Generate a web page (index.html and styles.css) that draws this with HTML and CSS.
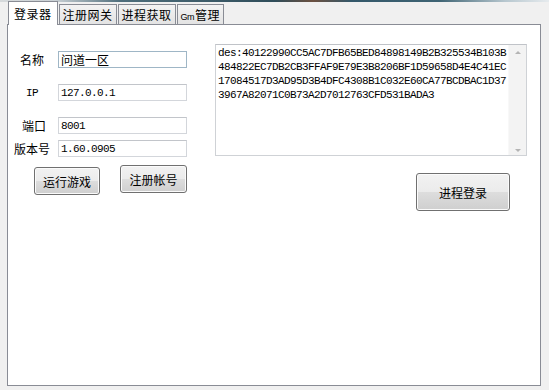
FILE: index.html
```html
<!DOCTYPE html>
<html lang="zh-CN">
<head>
  <meta charset="UTF-8">
  <meta name="viewport" content="width=device-width, initial-scale=1.0">
  <title>登录器</title>
  <link rel="stylesheet" href="styles.css">
</head>
<body>
<div class="titlebar"></div>
<div class="window">

  <!-- tab strip -->
  <div class="tabs">
    <div class="tab active">登录器</div>
    <div class="tab">注册网关</div>
    <div class="tab">进程获取</div>
    <div class="tab"><span class="gm">Gm</span>管理</div>
  </div>

  <div class="panel">
    <!-- left: server fields -->
    <div class="left">
      <div class="field first">
        <span class="label">名称</span>
        <input class="input hot" type="text" value="问道一区">
      </div>
      <div class="field">
        <span class="label mono">IP</span>
        <input class="input mono" type="text" value="127.0.0.1">
      </div>
      <div class="field">
        <span class="label port">端口</span>
        <input class="input mono" type="text" value="8001">
      </div>
      <div class="field tight">
        <span class="label">版本号</span>
        <input class="input mono" type="text" value="1.60.0905">
      </div>

      <div class="buttons">
        <button class="btn run">运行游戏</button>
        <button class="btn">注册帐号</button>
      </div>
    </div>

    <!-- right: key memo -->
    <div class="right">
      <div class="memo">
        <div class="memo-text">des:40122990CC5AC7DFB65BED84898149B2B325534B103B<br>484822EC7DB2CB3FFAF9E79E3B8206BF1D59658D4E4C41EC<br>17084517D3AD95D3B4DFC4308B1C032E60CA77BCDBAC1D37<br>3967A82071C0B73A2D7012763CFD531BADA3</div>
        <div class="scrollbar">
          <span class="arrow up"></span>
          <span class="arrow down"></span>
        </div>
      </div>
      <button class="btn big">进程登录</button>
    </div>
  </div>
</div>
</body>
</html>
```

FILE: styles.css
```css
body {
  margin: 0;
  width: 549px;
  height: 390px;
  overflow: hidden;
  background-color: #f0f0f0;
  font-family: "Noto Sans CJK SC", sans-serif;
  font-size: 12px;
  color: #000;
}

.titlebar {
  height: 2px;
  background: linear-gradient(90deg, #d6dadc 0%, #c9d0d4 10%, #4f6e7c 22%, #2f4d5a 50%, #6b5040 57%, #34586a 64%, #3f6474 80%, #b7c7cf 92%, #e6ebee 100%);
}

.window {
  padding-left: 7px;
}

/* Tabs */
.tabs {
  display: flex;
  align-items: flex-end;
  height: 22px;
  margin-left: 1px;
}

.tab {
  position: relative;
  height: 19px;
  line-height: 20px;
  padding: 0 3px;
  margin-left: 1px;
  letter-spacing: 0.5px;
  border: 1px solid #898c95;
  border-bottom: none;
  background: linear-gradient(#f3f3f3, #e3e3e3);
  white-space: nowrap;
}

.tab.active {
  height: 23px;
  line-height: 24px;
  padding: 0 5px;
  margin-left: 0;
  margin-bottom: -1px;
  background: #fff;
  z-index: 1;
}

.gm {
  font-family: "Liberation Sans", sans-serif;
  font-size: 9px;
  letter-spacing: -0.5px;
  margin-right: 1px;
}

/* Panel */
.panel {
  display: flex;
  gap: 28px;
  box-sizing: border-box;
  width: 534px;
  height: 362px;
  padding: 19px 0 0 6px;
  background: #fff;
  border: 1px solid #898c95;
}

.left {
  display: flex;
  flex-direction: column;
  width: 173px;
}

.field {
  display: flex;
  align-items: center;
  gap: 8px;
  height: 17px;
  margin-top: 16px;
}

.field.first {
  margin-top: 7px;
}

.field.tight {
  margin-top: 6px;
}

.label {
  width: 36px;
  text-align: center;
  white-space: nowrap;
}

.label.port {
  padding-left: 4px;
  box-sizing: border-box;
}

.mono {
  font-family: "Liberation Mono", monospace;
  font-size: 11px;
  letter-spacing: -0.6px;
}

.input {
  box-sizing: border-box;
  width: 129px;
  height: 17px;
  margin: 0;
  padding: 0 2px;
  border: 1px solid #d3d6db;
  border-top-color: #c2c5ca;
  background: #fff;
  color: #000;
  outline: none;
}

.input:not(.mono) {
  font-family: "Noto Sans CJK SC", sans-serif;
  font-size: 12px;
}

.input.hot {
  border-color: #9fb6c6;
}

.buttons {
  display: flex;
  align-items: flex-start;
  gap: 20px;
  margin: 8px 0 0 20px;
}

/* Win7 style push button */
.btn {
  box-sizing: border-box;
  width: 68px;
  height: 28px;
  padding: 0;
  font-family: "Noto Sans CJK SC", sans-serif;
  font-size: 12px;
  color: #000;
  border: 1px solid #707070;
  border-radius: 3px;
  background: linear-gradient(#f2f2f2 0%, #ebebeb 50%, #dddddd 51%, #cfcfcf 100%);
  box-shadow: inset 0 0 0 1px #fbfbfb;
}

.btn.run {
  width: 67px;
  margin-top: 2px;
}

.btn.big {
  width: 94px;
  height: 38px;
  margin: 17px 17px 0 0;
  align-self: flex-end;
}

/* Memo box */
.right {
  display: flex;
  flex-direction: column;
  width: 312px;
}

.memo {
  display: flex;
  box-sizing: border-box;
  height: 112px;
  border: 1px solid #cfd2d6;
  border-top-color: #c0c3c8;
}

.memo-text {
  flex: 1;
  padding: 1px 0 0 2px;
  font-family: "Liberation Mono", monospace;
  font-size: 11px;
  letter-spacing: -0.6px;
  line-height: 14px;
  white-space: nowrap;
  overflow: hidden;
}

.scrollbar {
  position: relative;
  width: 17px;
  background: #f3f3f3;
  border-left: 1px solid #f8f8f8;
}

.arrow {
  position: absolute;
  left: 6px;
  width: 0;
  height: 0;
  border-left: 3px solid transparent;
  border-right: 3px solid transparent;
}

.arrow.up {
  top: 6px;
  border-bottom: 3px solid #b4b4b4;
}

.arrow.down {
  bottom: 3px;
  border-top: 3px solid #b4b4b4;
}
```
